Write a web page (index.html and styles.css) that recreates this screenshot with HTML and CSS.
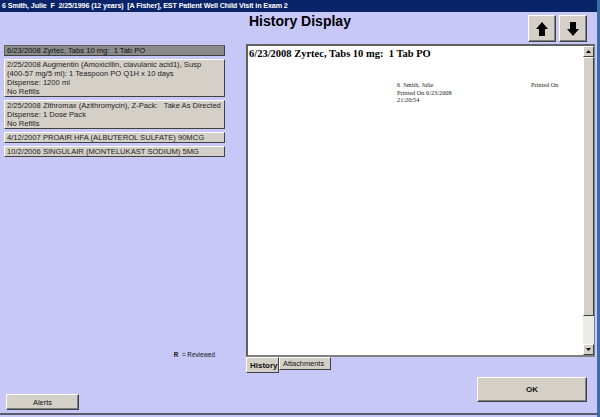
FILE: index.html
```html
<!DOCTYPE html>
<html>
<head>
<meta charset="utf-8">
<link rel="stylesheet" href="styles.css">
</head>
<body>
<div class="window">
  <div class="titlebar">6 Smith, Julie&nbsp; F&nbsp; 2/25/1996 (12 years)&nbsp; [A Fisher], EST Patient Well Child Visit in Exam 2</div>
  <div class="main">
    <div class="left">
      <div class="list">
        <div class="item sel">6/23/2008 Zyrtec, Tabs 10 mg:&nbsp; 1 Tab PO</div>
        <div class="item">2/25/2008 Augmentin (Amoxicillin, clavulanic acid1), Susp<br>(400-57 mg/5 ml): 1 Teaspoon PO Q1H x 10 days<br>Dispense: 1200 ml<br>No Refills</div>
        <div class="item">2/25/2008 Zithromax (Azithromycin), Z-Pack:&nbsp;&nbsp; Take As Directed<br>Dispense: 1 Dose Pack<br>No Refills</div>
        <div class="item">4/12/2007 PROAIR HFA (ALBUTEROL SULFATE) 90MCG</div>
        <div class="item">10/2/2006 SINGULAIR (MONTELUKAST SODIUM) 5MG</div>
      </div>
      <div class="legend"><b>R</b>&nbsp; = Reviewed</div>
      <div class="btn alerts">Alerts</div>
    </div>
    <div class="right">
      <div class="header">
        <h1 class="title">History Display</h1>
        <div class="arrows">
          <div class="btn arrow"><svg width="12" height="14" viewBox="0 0 12 14"><path d="M6 0 L12 7 L9 7 L9 14 L3 14 L3 7 L0 7 Z" fill="#000"/></svg></div>
          <div class="btn arrow"><svg width="12" height="14" viewBox="0 0 12 14"><path d="M6 14 L12 7 L9 7 L9 0 L3 0 L3 7 L0 7 Z" fill="#000"/></svg></div>
        </div>
      </div>
      <div class="panel">
        <div class="doc">
          <div class="doc-title">6/23/2008 Zyrtec, Tabs 10 mg:&nbsp; 1 Tab PO</div>
          <div class="printed">
            <div class="pcol">6&nbsp; Smith, Julie<br>Printed On 6/23/2008<br>21:20:54</div>
            <div class="pcol2">Printed On</div>
          </div>
        </div>
        <div class="scrollbar">
          <div class="sb-btn"><svg width="5" height="3" viewBox="0 0 5 3"><path d="M2.5 0 L5 3 L0 3 Z" fill="#000"/></svg></div>
          <div class="sb-thumb"></div>
          <div class="sb-track"></div>
          <div class="sb-btn"><svg width="5" height="3" viewBox="0 0 5 3"><path d="M0 0 L5 0 L2.5 3 Z" fill="#000"/></svg></div>
        </div>
      </div>
      <div class="tabs">
        <div class="tab active">History</div>
        <div class="tab">Attachments</div>
      </div>
      <div class="footer">
        <div class="btn ok">OK</div>
      </div>
    </div>
  </div>
</div>
</body>
</html>
```

FILE: styles.css
```css
* { box-sizing: border-box; }
html, body { margin: 0; padding: 0; }
body {
  width: 600px;
  height: 417px;
  overflow: hidden;
  font-family: "Liberation Sans", Arial, sans-serif;
  background: #c8c8f8;
}
.window {
  width: 600px;
  height: 417px;
  background: #c8c8f8;
  border-right: 3px solid #3a6ea5;
  display: flex;
  flex-direction: column;
}
.titlebar {
  height: 12px;
  background: #0a246a;
  color: #fff;
  font-family: "Liberation Sans", Arial, sans-serif;
  font-weight: bold;
  font-size: 7.2px;
  line-height: 12px;
  padding-left: 2px;
  white-space: nowrap;
  overflow: hidden;
  letter-spacing: -0.12px;
}
.main {
  height: 403px;
  display: flex;
  border-bottom: 2px solid #5a5a6a;
}
.left {
  width: 246px;
  display: flex;
  flex-direction: column;
  padding-top: 33px;
}
.list {
  margin-left: 4px;
  width: 221px;
  display: flex;
  flex-direction: column;
  gap: 3px;
}
.item {
  background: #d4d0c8;
  border: 1px solid;
  border-color: #ffffff #404040 #404040 #ffffff;
  font-size: 7.6px;
  line-height: 9px;
  padding: 0 0 0 2px;
  color: #222;
  white-space: nowrap;
  overflow: hidden;
}
.item.sel {
  background: #8a8a8a;
  border-color: #606060 #404040 #404040 #606060;
  color: #111;
}
.legend {
  margin-top: auto;
  text-align: right;
  padding-right: 31px;
  font-size: 6.3px;
  line-height: 7px;
  margin-bottom: 36px;
  color: #111;
}
.btn {
  background: #d4d0c8;
  border: 1px solid;
  border-color: #ffffff #404040 #404040 #ffffff;
  box-shadow: inset -1px -1px 0 #808080;
  display: flex;
  align-items: center;
  justify-content: center;
}
.alerts {
  margin-left: 6px;
  width: 73px;
  height: 16px;
  font-size: 7.5px;
  margin-bottom: 3px;
  color: #111;
}
.right {
  width: 351px;
  display: flex;
  flex-direction: column;
}
.header {
  height: 32px;
  display: flex;
  justify-content: space-between;
  align-items: flex-start;
  padding-right: 10px;
}
.title {
  margin: 1px 0 0 3px;
  font-size: 14px;
  line-height: 16px;
  font-weight: bold;
  color: #000;
}
.arrows {
  display: flex;
  gap: 3px;
  margin-top: 3px;
}
.arrow {
  width: 28px;
  height: 27px;
}
.panel {
  height: 313px;
  width: 349px;
  display: flex;
  background: #fff;
  border-top: 2px solid #606060;
  border-left: 2px solid #606060;
  border-right: 1px solid #808080;
  border-bottom: 2px solid #808080;
}
.doc {
  flex: 1;
  padding: 2px 0 0 1px;
  font-family: "Liberation Serif", "Times New Roman", serif;
  color: #000;
}
.doc-title {
  font-size: 10.5px;
  font-weight: bold;
  line-height: 12px;
}
.printed {
  display: flex;
  margin-top: 21px;
  padding-left: 148px;
  font-size: 6.3px;
  line-height: 7.5px;
  color: #222;
}
.pcol { width: 134px; }
.scrollbar {
  width: 11px;
  display: flex;
  flex-direction: column;
  background: #eceae6;
}
.sb-btn {
  height: 11px;
  background: #d4d0c8;
  border: 1px solid;
  border-color: #ffffff #404040 #404040 #ffffff;
  display: flex;
  align-items: center;
  justify-content: center;
}
.sb-thumb {
  height: 259px;
  background: #d4d0c8;
  border: 1px solid;
  border-color: #ffffff #404040 #404040 #ffffff;
}
.sb-track { flex: 1; }
.tabs {
  display: flex;
  align-items: flex-start;
}
.tab {
  background: #d4d0c8;
  border: 1px solid;
  border-color: #ffffff #404040 #404040 #ffffff;
  font-size: 7.4px;
  height: 13px;
  line-height: 11px;
  padding: 0 4px;
  color: #111;
}
.tab.active {
  height: 16px;
  line-height: 15px;
  font-weight: bold;
  font-size: 8px;
  width: 33px;
  padding: 0 3px;
}
.tab:not(.active) { width: 52px; padding: 0 3px; }
.footer {
  display: flex;
  justify-content: flex-end;
  padding-right: 10px;
  margin-top: 4px;
}
.ok {
  width: 110px;
  height: 25px;
  font-size: 8px;
  font-weight: bold;
  color: #111;
}
```
